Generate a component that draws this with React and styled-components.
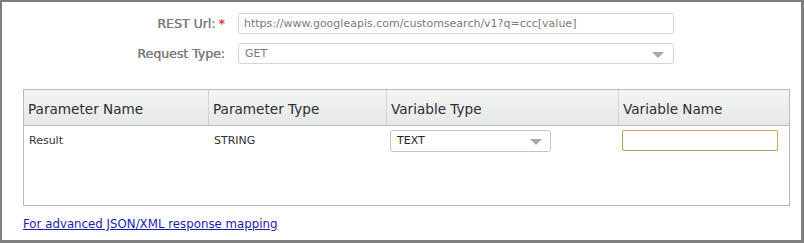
import React from "react";
import styled, { createGlobalStyle } from "styled-components";

const GlobalStyle = createGlobalStyle`
  * { box-sizing: border-box; }
  html, body { margin: 0; padding: 0; background: #fff; }
  body { font-family: "DejaVu Sans", Tahoma, Verdana, sans-serif; }
`;

const Frame = styled.div`
  width: 804px;
  height: 243px;
  border: solid #7f7f7f;
  border-width: 2px 3px 3px 2px;
  background: #fff;
  display: flex;
  flex-direction: column;
`;

const Form = styled.div`
  display: grid;
  grid-template-columns: 223px 436px;
  column-gap: 13px;
  row-gap: 9px;
  padding-top: 11px;
  align-items: center;
`;

const Label = styled.label`
  text-align: right;
  font-size: 12.5px;
  color: #7b7b7b;
  white-space: nowrap;
  text-shadow: 0.3px 0 0 #7b7b7b;
`;

const Star = styled.span`
  color: #e03a3a;
  margin-left: 3px;
  font-weight: bold;
  text-shadow: none;
`;

const TextBox = styled.input`
  height: 21px;
  width: ${p => p.width || "100%"};
  border: 1px solid ${p => (p.focused ? "#cfac52" : "#d4d4d4")};
  border-bottom-color: ${p => (p.focused ? "#a79d5e" : "#d4d4d4")};
  border-left-color: ${p => (p.focused ? "#b6a45c" : "#d4d4d4")};
  border-radius: 2px;
  padding: 0 5px;
  font-family: inherit;
  font-size: 11px;
  color: #7a7a7a;
  background: #fff;
  outline: none;
`;

const SelectBox = styled.div`
  position: relative;
  height: ${p => p.height || "21px"};
  width: ${p => p.width || "100%"};
  border: 1px solid ${p => p.border || "#d4d4d4"};
  border-radius: 3px;
  padding: 0 6px;
  display: flex;
  align-items: center;
  font-size: 11px;
  color: ${p => p.color || "#7a7a7a"};
  background: #fff;
`;

const Arrow = styled.span`
  position: absolute;
  right: ${p => p.right || "8px"};
  top: 50%;
  margin-top: -2px;
  width: 0;
  height: 0;
  border-left: 6px solid transparent;
  border-right: 6px solid transparent;
  border-top: 6px solid #a9a9a9;
`;

const Table = styled.div`
  margin: 25px 0 0 21px;
  width: 767px;
  height: 117px;
  border: 1px solid #b9b9b9;
  display: flex;
  flex-direction: column;
`;

const Row = styled.div`
  display: grid;
  grid-template-columns: 184px 178px 232px 1fr;
`;

const HeadRow = styled(Row)`
  height: 36px;
  background: linear-gradient(#f2f3f3, #e7e8e8);
  border-bottom: 1px solid #b9b9b9;
`;

const HeadCell = styled.div`
  display: flex;
  align-items: center;
  padding: 3px 0 0 ${p => p.pad || "4px"};
  font-size: 13.6px;
  color: #2e2e2e;
  border-left: ${p => (p.first ? "none" : "1px solid #d2d2d2")};
  white-space: nowrap;
`;

const BodyRow = styled(Row)`
  padding-top: 3px;
`;

const Cell = styled.div`
  display: flex;
  align-items: center;
  height: 22px;
  padding: 1px 0 0 ${p => p.pad || "5px"};
  font-size: 11px;
  color: #333;
`;

const LinkLine = styled.div`
  padding: 7px 0 0 21px;
`;

const Link = styled.a`
  font-size: 11.8px;
  color: #1d1dab;
  text-decoration: underline;
  cursor: pointer;
`;

export default function App() {
  return (
    <>
      <GlobalStyle />
      <Frame>
        <Form>
          <Label>
            REST Url:<Star>*</Star>
          </Label>
          <TextBox
            readOnly
            value="https://www.googleapis.com/customsearch/v1?q=ccc[value]"
          />
          <Label>Request Type:</Label>
          <SelectBox>
            GET
            <Arrow right="9px" />
          </SelectBox>
        </Form>

        <Table>
          <HeadRow>
            <HeadCell first>Parameter Name</HeadCell>
            <HeadCell>Parameter Type</HeadCell>
            <HeadCell>Variable Type</HeadCell>
            <HeadCell>Variable Name</HeadCell>
          </HeadRow>
          <BodyRow>
            <Cell>Result</Cell>
            <Cell pad="6px">STRING</Cell>
            <Cell pad="4px">
              <SelectBox width="161px" height="22px" color="#222" border="#c4c4c4">
                TEXT
                <Arrow right="8px" />
              </SelectBox>
            </Cell>
            <Cell pad="4px">
              <TextBox width="156px" focused readOnly value="" />
            </Cell>
          </BodyRow>
        </Table>

        <LinkLine>
          <Link>For advanced JSON/XML response mapping</Link>
        </LinkLine>
      </Frame>
    </>
  );
}
